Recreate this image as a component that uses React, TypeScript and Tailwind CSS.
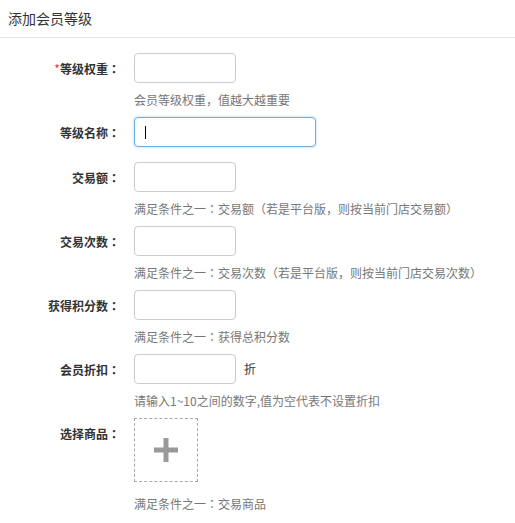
import React from "react";

const font = { fontFamily: '"Noto Sans CJK SC", "Noto Sans", sans-serif' };

function Colon() {
  return <span style={{ fontFamily: '"Noto Sans CJK TC", sans-serif' }}>：</span>;
}

function Label({ text, required }: { text: string; required?: boolean }) {
  return (
    <div className="w-[120px] h-[30px] flex items-center justify-end text-[12px] font-bold text-[#333] shrink-0 pt-[1px]">
      {required && <span className="text-[#e33] font-normal">*</span>}
      {text}
      <Colon />
    </div>
  );
}

function Hint({ children, mt = "mt-[7px]" }: { children: React.ReactNode; mt?: string }) {
  return <div className={`${mt} text-[12px] leading-[19px] text-[#777] whitespace-nowrap`}>{children}</div>;
}

function TextInput({ w = "w-[102px]" }: { w?: string }) {
  return (
    <input
      type="text"
      className={`${w} h-[30px] border border-[#ccc] rounded-[4px] outline-none px-[10px] text-[12px] bg-white`}
    />
  );
}

export default function App() {
  return (
    <div style={font} className="w-[515px] h-[523px] bg-white overflow-hidden text-[#333]">
      <div className="h-[38px] border-b border-[#e5e5e5] pl-[8px] flex items-center text-[14px] text-[#333]">
        添加会员等级
      </div>
      <div className="pt-[15px]">
        {/* 等级权重 */}
        <div className="flex mb-[8px]">
          <Label text="等级权重" required />
          <div className="ml-[14px]">
            <TextInput />
            <Hint>会员等级权重，值越大越重要</Hint>
          </div>
        </div>
        {/* 等级名称 */}
        <div className="flex mb-[15px]">
          <Label text="等级名称" />
          <div className="ml-[14px] relative">
            <input
              type="text"
              className="w-[182px] h-[30px] border border-[#66afe9] rounded-[4px] outline-none px-[10px] text-[12px] bg-white shadow-[0_0_3px_rgba(102,175,233,0.5)]"
            />
            <span className="absolute left-[11px] top-[9px] w-[1px] h-[13px] bg-black" />
          </div>
        </div>
        {/* 交易额 */}
        <div className="flex mb-[8px]">
          <Label text="交易额" />
          <div className="ml-[14px]">
            <TextInput />
            <Hint>满足条件之一<Colon />交易额（若是平台版，则按当前门店交易额）</Hint>
          </div>
        </div>
        {/* 交易次数 */}
        <div className="flex mb-[8px]">
          <Label text="交易次数" />
          <div className="ml-[14px]">
            <TextInput />
            <Hint>满足条件之一<Colon />交易次数（若是平台版，则按当前门店交易次数）</Hint>
          </div>
        </div>
        {/* 获得积分数 */}
        <div className="flex mb-[8px]">
          <Label text="获得积分数" />
          <div className="ml-[14px]">
            <TextInput />
            <Hint>满足条件之一<Colon />获得总积分数</Hint>
          </div>
        </div>
        {/* 会员折扣 */}
        <div className="flex mb-[8px]">
          <Label text="会员折扣" />
          <div className="ml-[14px]">
            <div className="flex items-center">
              <TextInput />
              <span className="ml-[8px] text-[12px] text-[#333]">折</span>
            </div>
            <Hint>请输入1~10之间的数字,值为空代表不设置折扣</Hint>
          </div>
        </div>
        {/* 选择商品 */}
        <div className="flex">
          <Label text="选择商品" />
          <div className="ml-[14px]">
            <div className="w-[64px] h-[64px] border border-dashed border-[#aaa] flex items-center justify-center">
              <svg width="24" height="24" viewBox="0 0 24 24">
                <rect x="0" y="9.5" width="24" height="5" fill="#999" />
                <rect x="9.5" y="0" width="5" height="24" fill="#999" />
              </svg>
            </div>
            <Hint mt="mt-[12px]">满足条件之一<Colon />交易商品</Hint>
          </div>
        </div>
      </div>
    </div>
  );
}
